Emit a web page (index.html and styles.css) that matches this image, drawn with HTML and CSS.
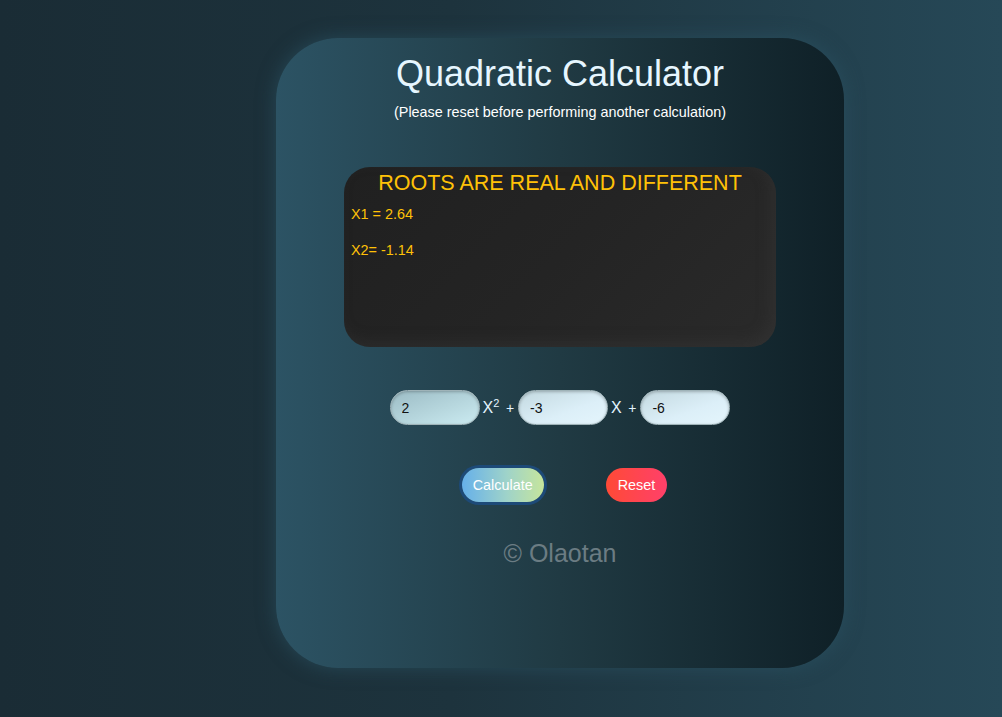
FILE: index.html
```html
<!DOCTYPE html>
<html lang="en">
<head>
<meta charset="utf-8">
<title>Quadratic Calculator</title>
<link rel="stylesheet" href="styles.css">
</head>
<body>
  <main class="card">
    <h1 class="title">Quadratic Calculator</h1>
    <p class="subtitle">(Please reset before performing another calculation)</p>

    <section class="result">
      <h2 class="result-head">ROOTS ARE REAL AND DIFFERENT</h2>
      <p class="root">X1 = 2.64</p>
      <p class="root root-2">X2= -1.14</p>
    </section>

    <div class="equation">
      <input class="coef coef-a" type="text" value="2">
      <span class="term">X<sup>2</sup></span>
      <span class="plus">+</span>
      <input class="coef" type="text" value="-3">
      <span class="term">X</span>
      <span class="plus">+</span>
      <input class="coef" type="text" value="-6">
    </div>

    <div class="actions">
      <button class="btn btn-calc" type="button">Calculate</button>
      <button class="btn btn-reset" type="button">Reset</button>
    </div>

    <footer class="credit">© Olaotan</footer>
  </main>
</body>
</html>
```

FILE: styles.css
```css
html, body {
  margin: 0;
  padding: 0;
}

body {
  width: 1002px;
  height: 717px;
  overflow: hidden;
  font-family: "Liberation Sans", Arial, sans-serif;
  background: linear-gradient(to right, #1a2c35 0%, #1d333d 45%, #264857 100%);
}

.card {
  box-sizing: border-box;
  width: 568px;
  height: 630px;
  margin: 38px 0 0 276px;
  padding-top: 15px;
  border-radius: 62px;
  background: linear-gradient(to right, #2c5364 0%, #203a43 50%, #0f2027 100%);
  box-shadow: 0 0 18px 1px rgba(44, 83, 100, 0.6);
  display: flex;
  flex-direction: column;
  align-items: center;
}

.title {
  margin: 0;
  font-size: 36px;
  font-weight: normal;
  line-height: 41px;
  color: #e6f6ff;
}

.subtitle {
  margin: 10px 0 0;
  font-size: 14.4px;
  line-height: 16px;
  color: #ffffff;
}

.result {
  box-sizing: border-box;
  width: 432px;
  height: 180px;
  margin-top: 47px;
  padding: 4px 7px 0;
  border-radius: 26px;
  background: linear-gradient(135deg, #202020 0%, #242424 50%, #2a2a2a 100%);
  box-shadow: inset -6px -6px 14px rgba(60, 60, 60, 0.35);
  color: #ffc107;
}

.result-head {
  margin: 0;
  text-align: center;
  font-size: 21.5px;
  font-weight: normal;
  line-height: 24px;
}

.root {
  margin: 11px 0 0;
  font-size: 14.4px;
  line-height: 16px;
}

.root-2 {
  margin-top: 20px;
}

.equation {
  margin-top: 43px;
  display: flex;
  align-items: center;
  color: #e3f4ff;
}

.coef {
  box-sizing: border-box;
  width: 90px;
  height: 35px;
  padding: 0 11px;
  border: 1px solid #9fb3b8;
  border-radius: 18px;
  background: linear-gradient(160deg, #c3d9e0 0%, #dceff8 60%, #e4f5fc 100%);
  box-shadow: inset 0 1px 3px rgba(0, 0, 0, 0.25);
  font-family: "Liberation Sans", Arial, sans-serif;
  font-size: 14px;
  color: #111;
  outline: none;
}

.coef-a {
  background: linear-gradient(160deg, #9cbcc5 0%, #b6d6dd 55%, #cbebf1 100%);
}

.term {
  margin-left: 3px;
  font-size: 16px;
  line-height: 18px;
}

.term sup {
  font-size: 11px;
  vertical-align: 6px;
  line-height: 0;
}

.plus {
  margin: 0 4px 0 6.5px;
  font-size: 14px;
}

.actions {
  margin-top: 43px;
  padding-left: 9px;
  display: flex;
  align-items: center;
  gap: 62px;
}

.btn {
  border: 0;
  border-radius: 17px;
  padding: 9px 11px;
  font-family: "Liberation Sans", Arial, sans-serif;
  font-size: 14.4px;
  line-height: 16px;
  color: #ffffff;
  cursor: pointer;
}

.btn-calc {
  background: linear-gradient(to right, #66b0ea 0%, #9fd3c9 55%, #c6e59c 100%);
  box-shadow: 0 0 0 3px #1d4a78;
}

.btn-reset {
  padding: 9px 12px;
  background: linear-gradient(to right, #ff4a36 0%, #ff406a 100%);
}

.credit {
  margin-top: 37px;
  font-size: 25px;
  line-height: 28px;
  color: #6b7c83;
}
```
